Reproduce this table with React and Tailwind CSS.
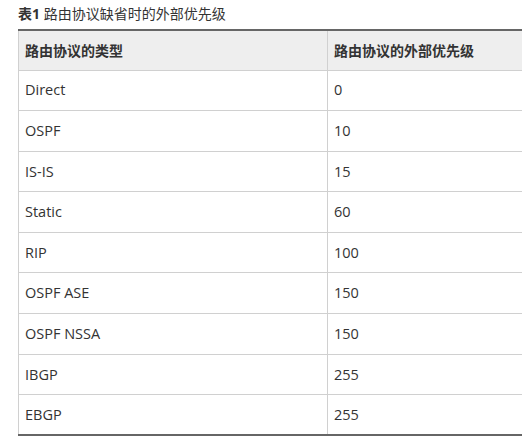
const rows = [
  ["Direct", "0"],
  ["OSPF", "10"],
  ["IS-IS", "15"],
  ["Static", "60"],
  ["RIP", "100"],
  ["OSPF ASE", "150"],
  ["OSPF NSSA", "150"],
  ["IBGP", "255"],
  ["EBGP", "255"],
];

export default function App() {
  return (
    <div
      className="w-[522px] h-[442px] overflow-hidden bg-white text-[#333] text-[14px]"
      style={{ fontFamily: '"Open Sans", "Noto Sans CJK SC", sans-serif' }}
    >
      <div className="pl-[18px] pt-[4px] h-[29px] leading-[20px]">
        <span className="font-bold">表1</span> 路由协议缺省时的外部优先级
      </div>
      <table className="ml-[18px] w-[510px] border-collapse border-t-2 border-b-2 border-t-[#666] border-b-[#666]">
        <thead>
          <tr className="bg-[#eeeeee] h-[40px]">
            <th className="text-left font-bold pl-[6px] w-[309px] border-l border-r border-[#d0d0d0] border-b">
              路由协议的类型
            </th>
            <th className="text-left font-bold pl-[6px] border-l border-[#d0d0d0] border-b">
              路由协议的外部优先级
            </th>
          </tr>
        </thead>
        <tbody>
          {rows.map(([name, pri], i) => (
            <tr key={i} className="h-[40.6px]">
              <td className="pl-[6px] text-[14.5px] border-l border-r border-[#d0d0d0] border-b">{name}</td>
              <td className="pl-[6px] text-[14.5px] border-[#d0d0d0] border-b">{pri}</td>
            </tr>
          ))}
        </tbody>
      </table>
    </div>
  );
}
